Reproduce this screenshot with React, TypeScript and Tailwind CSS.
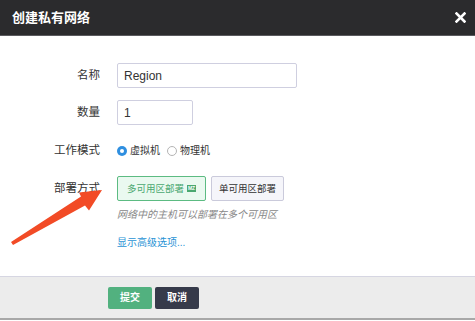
import React from "react";

const cjk = { fontFamily: '"Liberation Sans", "Noto Sans CJK SC", sans-serif' };

function FormRow({ label, children, className = "" }: { label: string; children: React.ReactNode; className?: string }) {
  return (
    <div className={`flex items-center ${className}`}>
      <div className="w-[100px] text-right text-[11.5px] text-[#333]">{label}</div>
      <div className="ml-[17px] flex items-center">{children}</div>
    </div>
  );
}

function Radio({ checked, label }: { checked?: boolean; label: string }) {
  return (
    <label className="flex items-center gap-[3px] mr-[7px]">
      <span
        className={`w-[10px] h-[10px] rounded-full flex items-center justify-center ${
          checked ? "bg-[#2f8fe0]" : "border border-[#b4b4b4] bg-white"
        }`}
      >
        {checked && <span className="w-[4px] h-[4px] rounded-full bg-white" />}
      </span>
      <span className="text-[10px] text-[#333]">{label}</span>
    </label>
  );
}

export default function App() {
  return (
    <div className="relative w-[475px] h-[321px] bg-white overflow-hidden" style={cjk}>
      {/* Header */}
      <div className="h-[36px] bg-[#2b2b2d] border-b border-[#5a5a5e] flex items-center justify-between pl-[12px] pr-[9px]">
        <span className="text-white text-[13px] font-bold">创建私有网络</span>
        <svg width="11" height="11" viewBox="0 0 11 11">
          <path d="M1.5 1.5 L9.5 9.5 M9.5 1.5 L1.5 9.5" stroke="#fff" strokeWidth="2.6" strokeLinecap="square" />
        </svg>
      </div>

      {/* Body */}
      <div className="h-[240px] pt-[27px] flex flex-col">
        <FormRow label="名称">
          <div className="w-[180px] h-[25px] border border-[#cfcfe0] rounded-[2px] px-[6px] flex items-center text-[12px] text-[#333]">
            Region
          </div>
        </FormRow>
        <FormRow label="数量" className="mt-[12px]">
          <div className="w-[76px] h-[25px] border border-[#cfcfe0] rounded-[2px] px-[6px] flex items-center text-[12px] text-[#333]">
            1
          </div>
        </FormRow>
        <FormRow label="工作模式" className="mt-[17px]">
          <Radio checked label="虚拟机" />
          <Radio label="物理机" />
        </FormRow>
        <FormRow label="部署方式" className="mt-[17px]">
          <div className="w-[89px] h-[25px] border border-[#5cbb82] bg-[#eaf9f0] rounded-[2px] flex items-center justify-center gap-[3px]">
            <span className="text-[9.5px] text-[#4aa870]">多可用区部署</span>
            <span className="h-[7px] px-[1px] bg-[#4aa870] text-white text-[5px] leading-[7px] font-bold">MZ</span>
          </div>
          <div className="ml-[5px] w-[73px] h-[25px] border border-[#cacadb] bg-[#f5f5fa] rounded-[2px] flex items-center justify-center">
            <span className="text-[9.5px] text-[#333]">单可用区部署</span>
          </div>
        </FormRow>
        <div className="ml-[117px] mt-[6px] text-[10px] italic text-[#888]">网络中的主机可以部署在多个可用区</div>
        <div className="ml-[117px] mt-[13px] text-[10px] text-[#2a93d5]">显示高级选项...</div>
      </div>

      {/* Footer */}
      <div className="h-[44px] bg-[#ececec] border-t border-[#d6d6e2] border-b-2 border-b-[#a8a8a8] flex items-center pl-[108px] gap-[3px]">
        <div className="w-[44px] h-[22px] bg-[#52b17f] rounded-[2px] flex items-center justify-center text-white text-[10px] font-bold">
          提交
        </div>
        <div className="w-[44px] h-[22px] bg-[#363a4a] rounded-[2px] flex items-center justify-center text-white text-[10px] font-bold">
          取消
        </div>
      </div>

      {/* Red arrow overlay */}
      <svg className="absolute left-0 top-0 pointer-events-none" width="475" height="321" viewBox="0 0 475 321">
        <polygon
          points="11,242 81,196.5 79,192.4 102,190 89,210.6 85,205.5 13,245"
          fill="#f24b26"
        />
      </svg>
    </div>
  );
}
